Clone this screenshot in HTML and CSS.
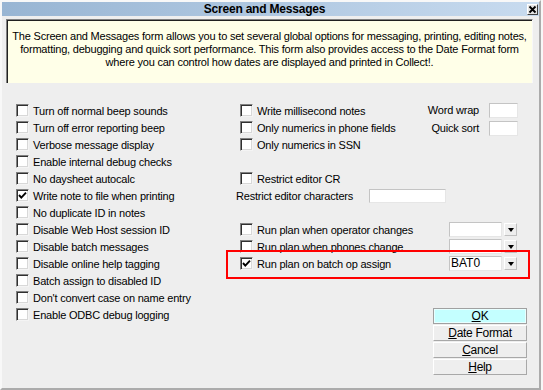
FILE: index.html
```html
<!DOCTYPE html>
<html>
<head>
<meta charset="utf-8">
<link rel="stylesheet" href="styles.css">
</head>
<body>
<div class="window">
  <div class="titlebar">
    <span class="title">Screen and Messages</span>
    <span class="close"><svg width="9" height="9" viewBox="0 0 9 9"><path d="M1.5 1.5 L7.5 7.5 M7.5 1.5 L1.5 7.5" stroke="#000" stroke-width="1.8"/></svg></span>
  </div>
  <div class="info">The Screen and Messages form allows you to set several global options for messaging, printing, editing notes,<br>formatting, debugging and quick sort performance. This form also provides access to the Date Format form<br>where you can control how dates are displayed and printed in Collect!.</div>
  <div class="main">
    <div class="col-left">
      <div class="row"><span class="cb"></span><span class="lbl">Turn off normal beep sounds</span></div>
      <div class="row"><span class="cb"></span><span class="lbl">Turn off error reporting beep</span></div>
      <div class="row"><span class="cb"></span><span class="lbl">Verbose message display</span></div>
      <div class="row"><span class="cb"></span><span class="lbl">Enable internal debug checks</span></div>
      <div class="row"><span class="cb"></span><span class="lbl">No daysheet autocalc</span></div>
      <div class="row"><span class="cb"><svg class="tick" width="11" height="11" viewBox="0 0 11 11"><path d="M2 5 L4.3 7.6 L9 2.6" fill="none" stroke="#000" stroke-width="1.9"/></svg></span><span class="lbl">Write note to file when printing</span></div>
      <div class="row"><span class="cb"></span><span class="lbl">No duplicate ID in notes</span></div>
      <div class="row"><span class="cb"></span><span class="lbl">Disable Web Host session ID</span></div>
      <div class="row"><span class="cb"></span><span class="lbl">Disable batch messages</span></div>
      <div class="row"><span class="cb"></span><span class="lbl">Disable online help tagging</span></div>
      <div class="row"><span class="cb"></span><span class="lbl">Batch assign to disabled ID</span></div>
      <div class="row"><span class="cb"></span><span class="lbl">Don't convert case on name entry</span></div>
      <div class="row"><span class="cb"></span><span class="lbl">Enable ODBC debug logging</span></div>
    </div>
    <div class="col-right">
      <div class="top-right">
        <div class="checks">
          <div class="row"><span class="cb"></span><span class="lbl">Write millisecond notes</span></div>
          <div class="row"><span class="cb"></span><span class="lbl">Only numerics in phone fields</span></div>
          <div class="row"><span class="cb"></span><span class="lbl">Only numerics in SSN</span></div>
        </div>
        <div class="fields">
          <div class="field-row"><span class="lbl">Word wrap</span><span class="input small"></span></div>
          <div class="field-row"><span class="lbl">Quick sort</span><span class="input small"></span></div>
        </div>
      </div>
      <div class="row"></div>
      <div class="row"><span class="cb"></span><span class="lbl">Restrict editor CR</span></div>
      <div class="row text-row"><span class="lbl text-lbl">Restrict editor characters</span><span class="input wide"></span></div>
      <div class="row"></div>
      <div class="row pad-right"><span class="cb"></span><span class="lbl">Run plan when operator changes</span><span class="combo"><span class="combo-field"></span><span class="combo-btn"><span class="arrow"></span></span></span></div>
      <div class="row pad-right"><span class="cb"></span><span class="lbl">Run plan when phones change</span><span class="combo"><span class="combo-field"></span><span class="combo-btn"><span class="arrow"></span></span></span></div>
      <div class="row pad-right highlight"><span class="cb"><svg class="tick" width="11" height="11" viewBox="0 0 11 11"><path d="M2 5 L4.3 7.6 L9 2.6" fill="none" stroke="#000" stroke-width="1.9"/></svg></span><span class="lbl">Run plan on batch op assign</span><span class="combo"><span class="combo-field">BAT0</span><span class="combo-btn"><span class="arrow"></span></span></span><span class="redbox"></span></div>
      <div class="buttons">
        <div class="btn ok"><u>O</u>K</div>
        <div class="btn"><u>D</u>ate Format</div>
        <div class="btn"><u>C</u>ancel</div>
        <div class="btn"><u>H</u>elp</div>
      </div>
    </div>
  </div>
</div>
</body>
</html>
```
FILE: styles.css
```css
html, body {
  margin: 0;
  padding: 0;
  background: #f7f7f7;
}
.window {
  width: 541px;
  height: 390px;
  box-sizing: border-box;
  border-top: 2px solid #f8f8f8;
  border-left: 2px solid #f8f8f8;
  border-right: 2px solid #ababab;
  border-bottom: 2px solid #ababab;
  background: #eeeeee;
  font-family: "Liberation Sans", Arial, sans-serif;
  font-size: 11px;
  letter-spacing: -0.2px;
  color: #000;
}
.titlebar {
  height: 14px;
  display: flex;
  align-items: center;
  background: linear-gradient(to right, #98b5d3, #c8dbef);
}
.title {
  flex: 1;
  text-align: center;
  font-weight: bold;
  font-size: 12px;
  letter-spacing: -0.2px;
  line-height: 14px;
}
.close {
  width: 11px;
  height: 11px;
  box-sizing: border-box;
  margin-right: 1px;
  background: #e4e4e4;
  border: 1px solid;
  border-color: #fff #404040 #404040 #fff;
  display: flex;
  align-items: center;
  justify-content: center;
}
.info {
  margin: 3px 0 0 4px;
  width: 527px;
  height: 64px;
  box-sizing: border-box;
  background: #ffffe8;
  border-top: 1px solid #808080;
  border-left: 1px solid #808080;
  border-right: 1px solid #f8f8f8;
  box-shadow: inset 1px 1px 0 #202020;
  text-align: center;
  white-space: nowrap;
  line-height: 13px;
  padding-top: 10px;
}
.main {
  display: grid;
  grid-template-columns: 224px 287px;
  margin-top: 19px;
  padding-left: 14px;
}
.row {
  height: 17px;
  display: flex;
  align-items: center;
  white-space: nowrap;
  position: relative;
}
.cb {
  width: 13px;
  height: 13px;
  box-sizing: border-box;
  flex: none;
  margin-right: 4px;
  background: #fff;
  border: 1px solid;
  border-color: #808080 #f4f4f4 #f4f4f4 #808080;
  box-shadow: inset 1px 1px 0 #303030, inset -1px -1px 0 #d8d8d8;
  position: relative;
}
.tick {
  position: absolute;
  left: 0;
  top: 0;
}
.top-right {
  display: flex;
  justify-content: space-between;
  padding-right: 9px;
}
.fields {
  padding-top: 1px;
}
.field-row {
  height: 18px;
  display: flex;
  justify-content: flex-end;
  align-items: flex-start;
  line-height: 15px;
  white-space: nowrap;
}
.input {
  display: block;
  box-sizing: border-box;
  background: #fff;
  border: 1px solid;
  border-color: #c4c4c4 #e6e6e6 #e6e6e6 #c4c4c4;
}
.small {
  width: 29px;
  height: 15px;
  margin-left: 10px;
}
.text-row {
  margin-left: -4px;
}
.text-lbl {
  width: 133px;
}
.wide {
  width: 77px;
  height: 14px;
}
.pad-right {
  padding-right: 10px;
}
.combo {
  margin-left: auto;
  display: flex;
  align-items: center;
}
.combo-field {
  width: 53px;
  height: 15px;
  box-sizing: border-box;
  background: #fff;
  border: 1px solid;
  border-color: #c4c4c4 #e6e6e6 #e6e6e6 #c4c4c4;
  line-height: 13px;
  padding-left: 1px;
  font-size: 12px;
  letter-spacing: 0;
}
.combo-btn {
  width: 13px;
  height: 13px;
  margin-left: 2px;
  box-sizing: border-box;
  background: #eeeeee;
  border: 1px solid;
  border-color: #fff #c0c0c0 #c0c0c0 #fff;
  display: flex;
  align-items: center;
  justify-content: center;
}
.arrow {
  width: 0;
  height: 0;
  border-left: 3.5px solid transparent;
  border-right: 3.5px solid transparent;
  border-top: 4px solid #000;
}
.redbox {
  position: absolute;
  left: -14px;
  top: -5px;
  width: 304px;
  height: 29px;
  box-sizing: border-box;
  border: 2px solid #ff0000;
}
.buttons {
  margin-top: 36px;
  margin-left: auto;
  width: 94px;
  display: flex;
  flex-direction: column;
  gap: 1px;
}
.btn {
  height: 16px;
  box-sizing: border-box;
  border: 1px solid;
  border-color: #fff #a8a8a8 #a8a8a8 #fff;
  background: #eeeeee;
  text-align: center;
  line-height: 14px;
  font-size: 12px;
  letter-spacing: -0.3px;
}
.btn.ok {
  background: #c4ffff;
  border-color: #a0a0a0;
  box-shadow: inset 1px 1px 0 #e8ffff, inset -1px -1px 0 #e8ffff;
}
```
